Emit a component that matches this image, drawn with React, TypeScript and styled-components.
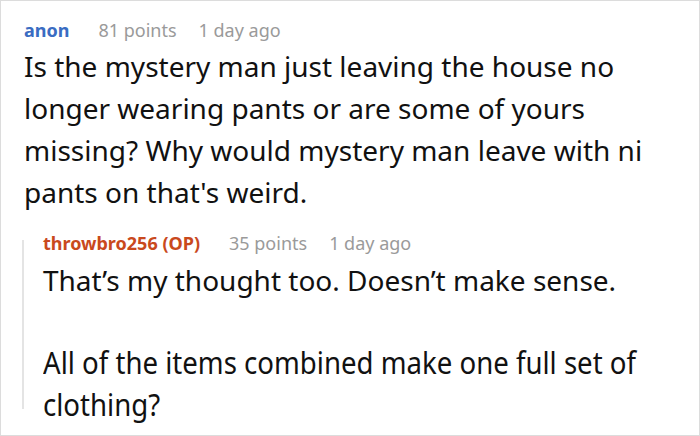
import styled, { createGlobalStyle } from 'styled-components'

const GlobalStyle = createGlobalStyle`
  html, body {
    margin: 0;
    padding: 0;
    background: #ffffff;
  }
  body {
    font-family: 'Noto Sans', 'Open Sans', sans-serif;
  }
`

const Frame = styled.div`
  width: 700px;
  height: 436px;
  box-sizing: border-box;
  border: 1px solid #dcdcdc;
  padding: 17px 0 0 21px;
  overflow: hidden;
  background: #fff;
`

const Comment = styled.div`
  display: flex;
  flex-direction: column;
  padding-left: 2px;
`

const Meta = styled.div`
  display: flex;
  align-items: baseline;
  font-size: 18px;
  line-height: 24px;
  white-space: nowrap;
`

const Author = styled.span<{ $color: string }>`
  color: ${({ $color }) => $color};
  font-weight: 700;
  margin-right: 29px;
`

const MetaInfo = styled.span`
  color: #9a9a9a;
  margin-right: 22px;
`

const Body = styled.p`
  margin: 3px 0 0;
  font-size: 28px;
  line-height: 42px;
  color: #111;
  width: 660px;
`

const Condensed = styled.p`
  margin: 0;
  font-size: 30px;
  line-height: 42px;
  color: #111;
  width: 760px;
  transform: scaleX(0.92);
  transform-origin: left top;
`

const Reply = styled.div`
  display: flex;
  margin-top: 18px;
`

const ThreadLine = styled.div`
  width: 2px;
  background: #e4e4e4;
  margin-top: 9px;
  margin-bottom: 17px;
  flex-shrink: 0;
`

const ReplyContent = styled.div`
  display: flex;
  flex-direction: column;
  padding-left: 19px;
`

const ReplyBody = styled(Body)`
  margin-top: 4px;
`

const Spacer = styled.div`
  height: 41px;
`

export default function App() {
  return (
    <>
      <GlobalStyle />
      <Frame>
        <Comment>
          <Meta>
            <Author $color="#3a6cc2">anon</Author>
            <MetaInfo>81 points</MetaInfo>
            <MetaInfo>1 day ago</MetaInfo>
          </Meta>
          <Body>
            Is the mystery man just leaving the house no longer wearing pants
            or are some of yours missing? Why would mystery man leave with ni
            pants on that's weird.
          </Body>
        </Comment>
        <Reply>
          <ThreadLine />
          <ReplyContent>
            <Meta>
              <Author $color="#c9491d">throwbro256 (OP)</Author>
              <MetaInfo>35 points</MetaInfo>
              <MetaInfo>1 day ago</MetaInfo>
            </Meta>
            <ReplyBody>That’s my thought too. Doesn’t make sense.</ReplyBody>
            <Spacer />
            <Condensed>
              All of the items combined make one full set of
              <br />
              clothing?
            </Condensed>
          </ReplyContent>
        </Reply>
      </Frame>
    </>
  )
}
